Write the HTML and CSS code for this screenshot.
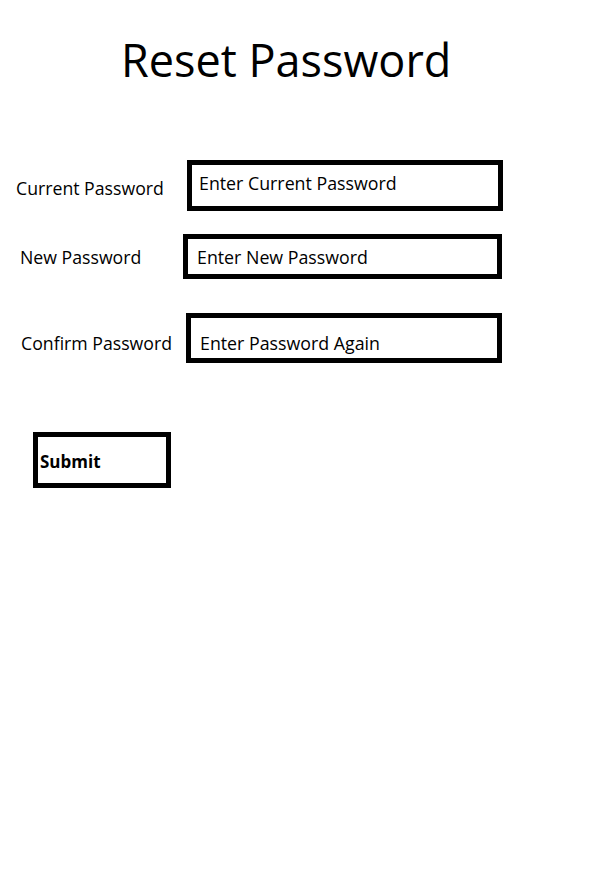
FILE: index.html
```html
<!DOCTYPE html>
<html lang="en">
<head>
    <meta charset="UTF-8">
    <meta name="viewport" content="width=device-width, initial-scale=1.0">
    <title>Reset Password</title>
    <link rel="stylesheet" href="styles.css">
</head>
<body>
    <main class="page">
        <h1 class="title">Reset Password</h1>

        <form class="reset-form">
            <div class="field field-current">
                <label for="current">Current Password</label>
                <input type="password" id="current" placeholder="Enter Current Password">
            </div>

            <div class="field field-new">
                <label for="newpass">New Password</label>
                <input type="password" id="newpass" placeholder="Enter New Password">
            </div>

            <div class="field field-confirm">
                <label for="confirm">Confirm Password</label>
                <input type="password" id="confirm" placeholder="Enter Password Again">
            </div>

            <button type="submit" class="submit-btn">Submit</button>
        </form>
    </main>
</body>
</html>
```

FILE: styles.css
```css
body {
    margin: 0;
    background-color: #fff;
    color: #000;
    font-family: 'Open Sans', 'Noto Sans', sans-serif;
}

.page {
    padding-top: 29px;
}

.title {
    margin: 0;
    padding-left: 121px;
    font-size: 45px;
    font-weight: 400;
    line-height: 61px;
}

.reset-form {
    margin-top: 70px;
}

/* each row: label on the left, a thick black box on the right */
.field {
    display: flex;
    align-items: flex-start;
}

.field label {
    font-size: 17.7px;
    line-height: 24px;
}

.field input {
    box-sizing: border-box;
    border: 5px solid #000;
    border-radius: 0;
    outline: none;
    background-color: #fff;
    font-family: 'Open Sans', 'Noto Sans', sans-serif;
    font-size: 17.8px;
    line-height: 24px;
    color: #000;
    margin: 0;
}

.field input::placeholder {
    color: #000;
    opacity: 1;
}

.field-current {
    padding-left: 16px;
}

.field-current label {
    width: 171px;
    margin-top: 16px;
}

.field-current input {
    width: 316px;
    height: 51px;
    padding: 6px 5px 11px 7px;
}

.field-new {
    margin-top: 23px;
    padding-left: 20px;
}

.field-new label {
    width: 163px;
    margin-top: 11px;
}

.field-new input {
    width: 319px;
    height: 45px;
    padding: 6px 7px 5px 9px;
}

.field-confirm {
    margin-top: 34px;
    padding-left: 21px;
}

.field-confirm label {
    width: 165px;
    margin-top: 18px;
}

.field-confirm input {
    width: 316px;
    height: 50px;
    padding: 13px 7px 3px 9px;
}

.submit-btn {
    display: block;
    box-sizing: border-box;
    width: 138px;
    height: 56px;
    margin: 69px 0 0 33px;
    padding: 15px 0 11px 2px;
    border: 5px solid #000;
    border-radius: 0;
    background-color: #fff;
    color: #000;
    text-align: left;
    font-family: 'Open Sans', 'Noto Sans', sans-serif;
    font-size: 17px;
    font-weight: 700;
    line-height: 20px;
    cursor: pointer;
}
```
